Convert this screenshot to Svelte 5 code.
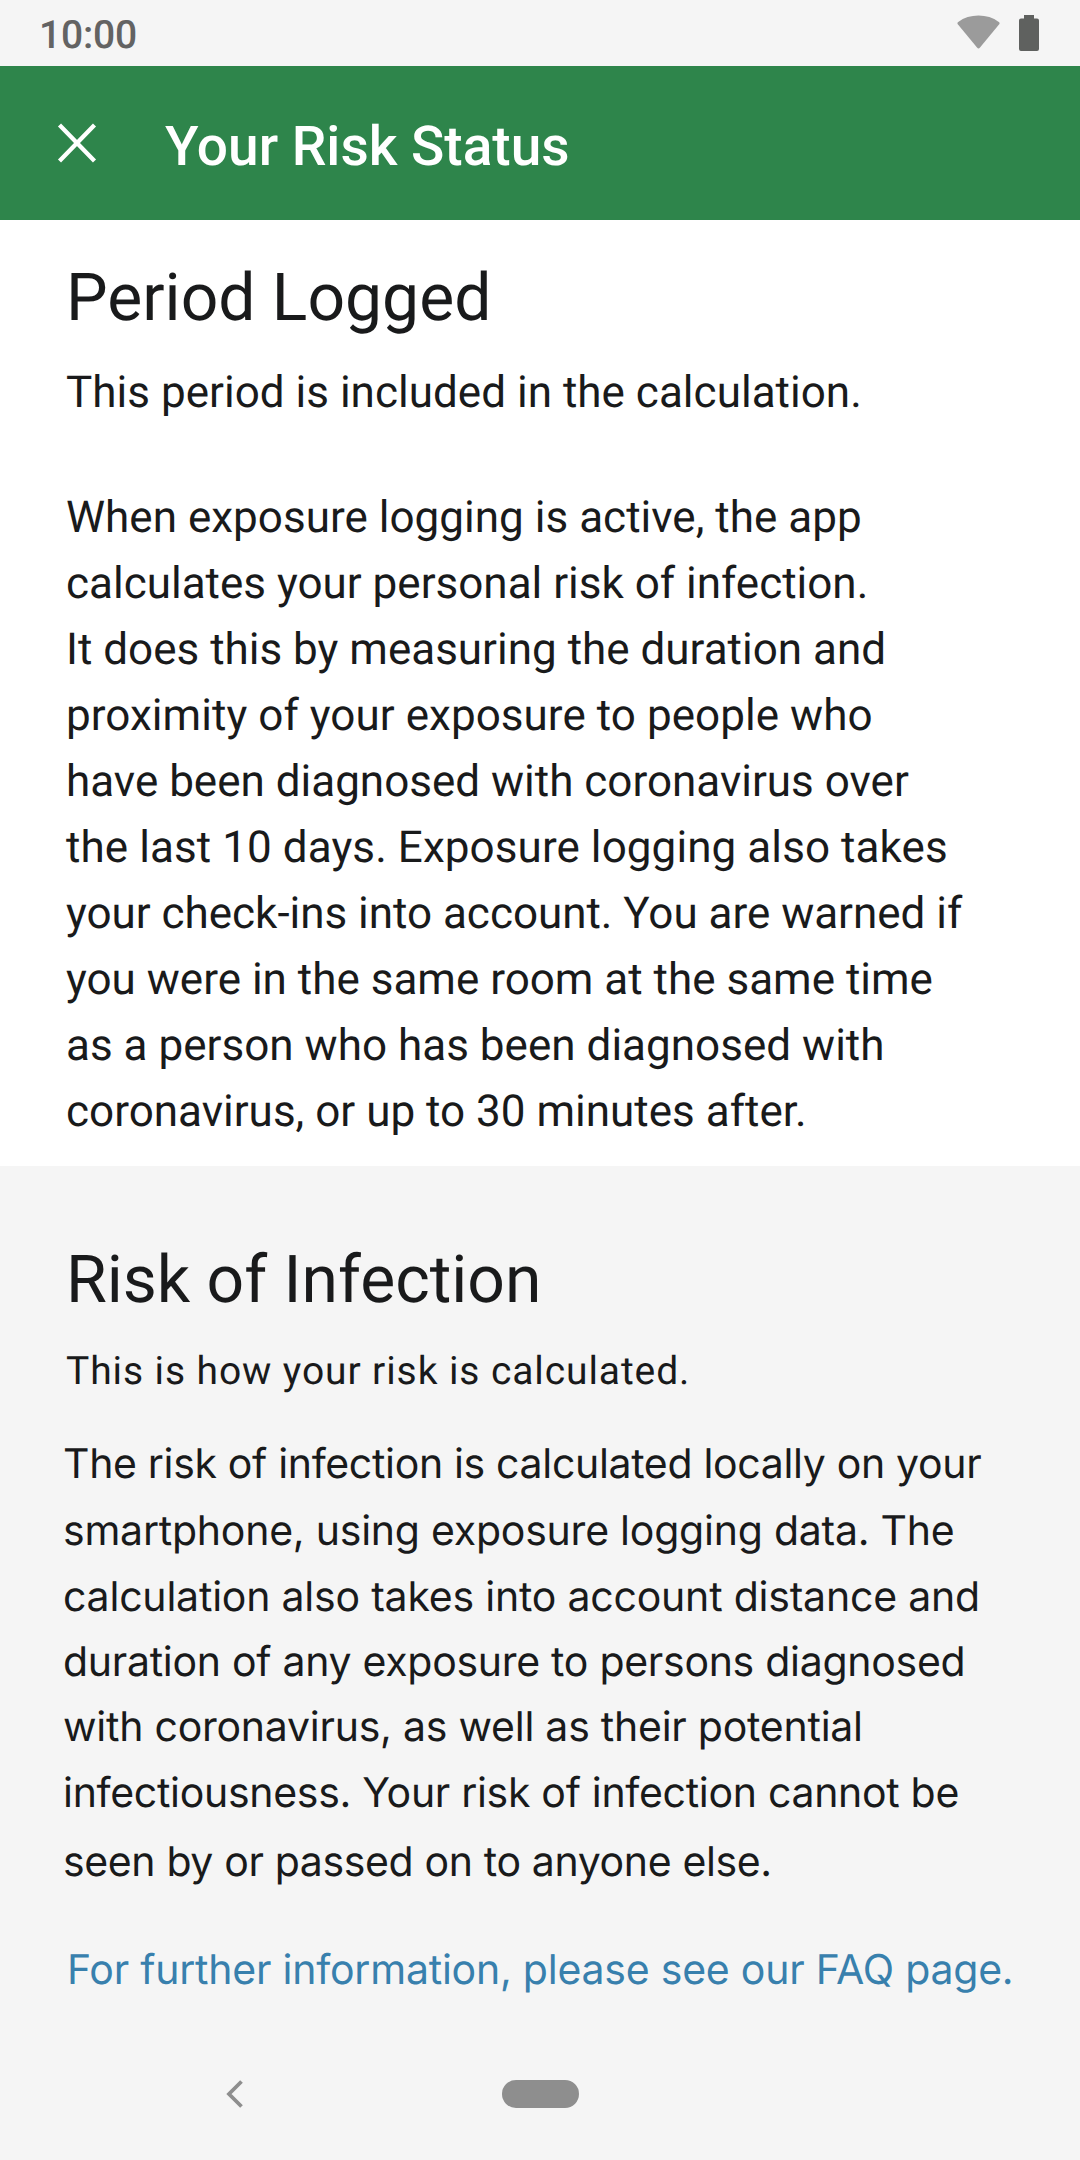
<script>
  // Each line carries its tracking in pixels and, for the risk copy, the extra lead above it.
  const logged = [
    ['When exposure logging is active, the app', 0.02],
    ['calculates your personal risk of infection.', 0],
    ['It does this by measuring the duration and', 0],
    ['proximity of your exposure to people who', 0.05],
    ['have been diagnosed with coronavirus over', 0],
    ['the last 10 days. Exposure logging also takes', 0.08],
    ['your check-ins into account. You are warned if', -0.02],
    ['you were in the same room at the same time', 0],
    ['as a person who has been diagnosed with', 0.02],
    ['coronavirus, or up to 30 minutes after.', 0.01]
  ];
  const risk = [
    ['The risk of infection is calculated locally on your', -0.33, 0],
    ['smartphone, using exposure logging data. The', -0.23, 2],
    ['calculation also takes into account distance and', -0.21, 1],
    ['duration of any exposure to persons diagnosed', -0.28, 0],
    ['with coronavirus, as well as their potential', -0.24, 0],
    ['infectiousness. Your risk of infection cannot be', -0.3, 1],
    ['seen by or passed on to anyone else.', -0.36, 4]
  ];
</script>

<div class="screen">
  <div class="status">
    <span class="time">10:00</span>
    <svg width="43" height="34" viewBox="0 0 43 34"><path d="M1 9.5Q-.2 8 1.200 6.900Q10 .5 21.500.5T41.800 6.900Q43.200 8 42 9.500L23 32.500Q21.500 34.300 20 32.500Z" fill="#9b9b9b" /></svg>
    <svg class="battery" width="20" height="36" viewBox="0 0 20 36"><path d="M5 0h10v3.500h3q2 0 2 2V34q0 2-2 2H2q-2 0-2-2V5.500q0-2 2-2h3Z" fill="#5f615f" /></svg>
  </div>
  <header>
    <svg width="40" height="40" viewBox="0 0 40 40"><path d="M2.500 2L37.500 38M37.500 2L2.500 38" stroke="#fff" stroke-width="4.300" /></svg>
    <h1>Your Risk Status</h1>
  </header>
  <section class="logged">
    <h2>Period Logged</h2>
    <p class="lead">This period is included in the calculation.</p>
    <p class="body">{#each logged as [text, tracking]}<span style:letter-spacing="{tracking}px">{text}</span>{/each}</p>
  </section>
  <section class="risk">
    <h2>Risk of Infection</h2>
    <p class="lead">This is how your risk is calculated.</p>
    <p class="body">{#each risk as [text, tracking, gap]}<span style:letter-spacing="{tracking}px" style:padding-top="{gap}px">{text}</span>{/each}</p>
    <a href="#faq">For further information, please see our FAQ page.</a>
  </section>
  <nav>
    <svg width="18" height="28" viewBox="0 0 18 28"><path d="M15.500 1.500L3 14L15.500 26.500" fill="none" stroke="#8e8e8e" stroke-width="3.800" /></svg>
    <i></i>
  </nav>
</div>

<style>
  :global(body) { margin: 0; background: #f5f5f5; }
  .screen { width: 1080px; height: 2160px; display: flex; flex-direction: column; overflow: hidden; background: #f5f5f5; color: #191a1b; font-family: Roboto, sans-serif; text-rendering: geometricPrecision; }
  h1, h2, p { margin: 0; font-weight: 400; white-space: nowrap; }
  .status { height: 66px; display: flex; box-sizing: border-box; padding: 15px 41px 0 39px; }
  .time { flex: 1; font-size: 39px; line-height: 40px; font-weight: 500; color: #636363; letter-spacing: -.2px; }
  .battery { margin-left: 19px; }
  header { height: 154px; display: flex; align-items: center; padding-left: 57px; background: #2e854b; color: #fff; }
  h1 { margin: 8px 0 0 68px; font-size: 55px; font-weight: 500; }
  .logged { height: 946px; box-sizing: border-box; padding: 39px 66px 0; background: #fff; }
  h2 { font-size: 66px; line-height: 80px; }
  .logged .lead { margin-top: 20px; font-size: 44px; line-height: 66px; letter-spacing: .02px; }
  .logged .body { margin-top: 59px; font-size: 44px; line-height: 66px; }
  .body span { display: block; }
  .risk { height: 850px; box-sizing: border-box; padding: 75px 0 0 66px; }
  .risk .lead { margin-top: 20px; font-size: 39px; line-height: 60px; letter-spacing: .9px; }
  .risk .body { margin: 30px 0 0 -3px; font-size: 41px; line-height: 65px; font-family: Inter, sans-serif; }
  a { display: block; margin: 43px 0 0 1px; color: #3880ad; font: 41px/65px Inter, sans-serif; letter-spacing: -.22px; text-decoration: none; white-space: nowrap; }
  nav { height: 144px; display: flex; align-items: center; box-sizing: border-box; padding: 12px 0 0 226px; }
  nav i { width: 77px; height: 28px; margin-left: 258px; border-radius: 14px; background: #8e8e8e; }
</style>
